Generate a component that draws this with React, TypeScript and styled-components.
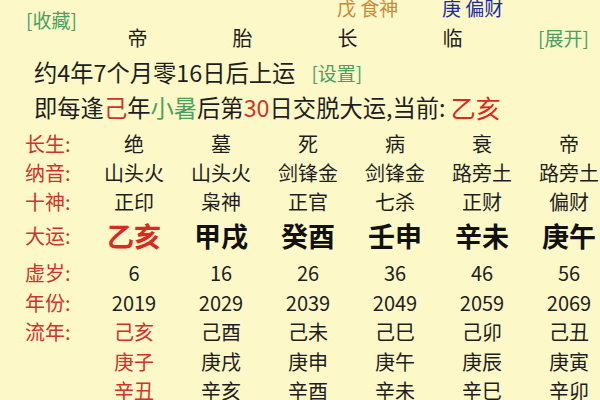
import React from "react";
import styled, { createGlobalStyle } from "styled-components";

const Global = createGlobalStyle`
  html, body { margin: 0; padding: 0; background: #fcf8c8; }
  body { font-family: "Noto Sans CJK SC", "Noto Sans", sans-serif; color: #222; }
`;

const C = {
  bg: "#fcf8c8",
  green: "#4a9f63",
  red: "#cf332c",
  bright: "#d92a22",
  orange: "#c98a3a",
  blue: "#1c2ca0",
  ink: "#1e1e1e",
};

const Page = styled.div`
  width: 600px;
  height: 400px;
  overflow: hidden;
  background: ${C.bg};
  position: relative;
`;

const Top = styled.div`
  display: grid;
  grid-template-columns: 85px repeat(4, 105px) 1fr;
  grid-template-rows: 18px 22px;
  row-gap: 10px;
  margin-top: -1px;
`;

const Link = styled.span<{ $size?: number }>`
  color: ${C.green};
  font-size: ${(p) => p.$size ?? 19}px;
  line-height: 22px;
  white-space: nowrap;
`;

const Fav = styled.div`
  grid-column: 1;
  grid-row: 1 / span 2;
  padding-left: 26px;
  margin-top: 10px;
`;

const Expand = styled.div`
  grid-column: 6;
  grid-row: 2;
  padding-left: 33px;
`;

const HeadCell = styled.div<{ $col: number; $color: string }>`
  grid-column: ${(p) => p.$col};
  grid-row: 1;
  padding-left: 42px;
  font-size: 19px;
  line-height: 18px;
  color: ${(p) => p.$color};
  white-space: nowrap;
`;

const PillarCell = styled.div<{ $col: number }>`
  grid-column: ${(p) => p.$col};
  grid-row: 2;
  text-align: center;
  font-size: 20px;
  line-height: 22px;
  color: ${C.ink};
`;

const Lines = styled.div`
  margin-top: 6px;
  padding-left: 34px;
  font-size: 23.3px;
  line-height: 35px;
  white-space: nowrap;
  color: ${C.ink};
`;

const Line = styled.div`
  display: flex;
  align-items: center;
  height: 35px;
`;

const Gap = styled.span`
  display: inline-block;
  width: 16px;
`;

const Tint = styled.span<{ $color: string; $size?: number }>`
  color: ${(p) => p.$color};
  font-size: ${(p) => (p.$size ? `${p.$size}px` : "inherit")};
`;

const Table = styled.div`
  margin-top: 4px;
  padding-left: 25px;
  display: grid;
  grid-template-columns: 65.5px repeat(6, 87px);
`;

const Label = styled.div<{ $h: number }>`
  height: ${(p) => p.$h}px;
  display: flex;
  align-items: center;
  color: ${C.red};
  font-size: 20px;
  white-space: nowrap;
`;

const Cell = styled.div<{ $h: number; $big?: boolean; $red?: boolean }>`
  height: ${(p) => p.$h}px;
  display: flex;
  align-items: center;
  justify-content: center;
  white-space: nowrap;
  font-size: ${(p) => (p.$big ? 27 : 20)}px;
  font-weight: ${(p) => (p.$big ? 700 : 400)};
  color: ${(p) => (p.$red ? (p.$big ? C.bright : C.red) : p.$big ? "#111" : C.ink)};
`;

const Spacer = styled.div`
  grid-column: 1 / -1;
  height: 3px;
`;

type Row = { label: string; cells: string[]; h: number; big?: boolean; redFirst?: boolean };

const upper: Row[] = [
  { label: "长生:", cells: ["绝", "墓", "死", "病", "衰", "帝"], h: 29 },
  { label: "纳音:", cells: ["山头火", "山头火", "剑锋金", "剑锋金", "路旁土", "路旁土"], h: 29 },
  { label: "十神:", cells: ["正印", "枭神", "正官", "七杀", "正财", "偏财"], h: 29 },
  { label: "大运:", cells: ["乙亥", "甲戌", "癸酉", "壬申", "辛未", "庚午"], h: 39, big: true, redFirst: true },
];

const lower: Row[] = [
  { label: "虚岁:", cells: ["6", "16", "26", "36", "46", "56"], h: 29.5 },
  { label: "年份:", cells: ["2019", "2029", "2039", "2049", "2059", "2069"], h: 29.5 },
  { label: "流年:", cells: ["己亥", "己酉", "己未", "己巳", "己卯", "己丑"], h: 29.5, redFirst: true },
  { label: "", cells: ["庚子", "庚戌", "庚申", "庚午", "庚辰", "庚寅"], h: 29.5, redFirst: true },
  { label: "", cells: ["辛丑", "辛亥", "辛酉", "辛未", "辛巳", "辛卯"], h: 29.5, redFirst: true },
];

const renderRow = (r: Row, i: number) => (
  <React.Fragment key={r.label + i}>
    <Label $h={r.h}>{r.label}</Label>
    {r.cells.map((c, j) => (
      <Cell key={j} $h={r.h} $big={r.big} $red={r.redFirst && j === 0}>
        {c}
      </Cell>
    ))}
  </React.Fragment>
);

export default function App() {
  return (
    <Page>
      <Global />
      <Top>
        <Fav>
          <Link>[收藏]</Link>
        </Fav>
        <HeadCell $col={4} $color={C.orange}>戊 食神</HeadCell>
        <HeadCell $col={5} $color={C.blue}>庚 偏财</HeadCell>
        <PillarCell $col={2}>帝</PillarCell>
        <PillarCell $col={3}>胎</PillarCell>
        <PillarCell $col={4}>长</PillarCell>
        <PillarCell $col={5}>临</PillarCell>
        <Expand>
          <Link>[展开]</Link>
        </Expand>
      </Top>
      <Lines>
        <Line>
          约4年7个月零16日后上运
          <Gap />
          <Link>[设置]</Link>
        </Line>
        <Line>
          即每逢<Tint $color={C.red}>己</Tint>年<Tint $color={C.green}>小暑</Tint>后第
          <Tint $color={C.red}>30</Tint>日交脱大运,当前:&nbsp;
          <Tint $color={C.bright} $size={25}>乙亥</Tint>
        </Line>
      </Lines>
      <Table>
        {upper.map(renderRow)}
        <Spacer />
        {lower.map(renderRow)}
      </Table>
    </Page>
  );
}
